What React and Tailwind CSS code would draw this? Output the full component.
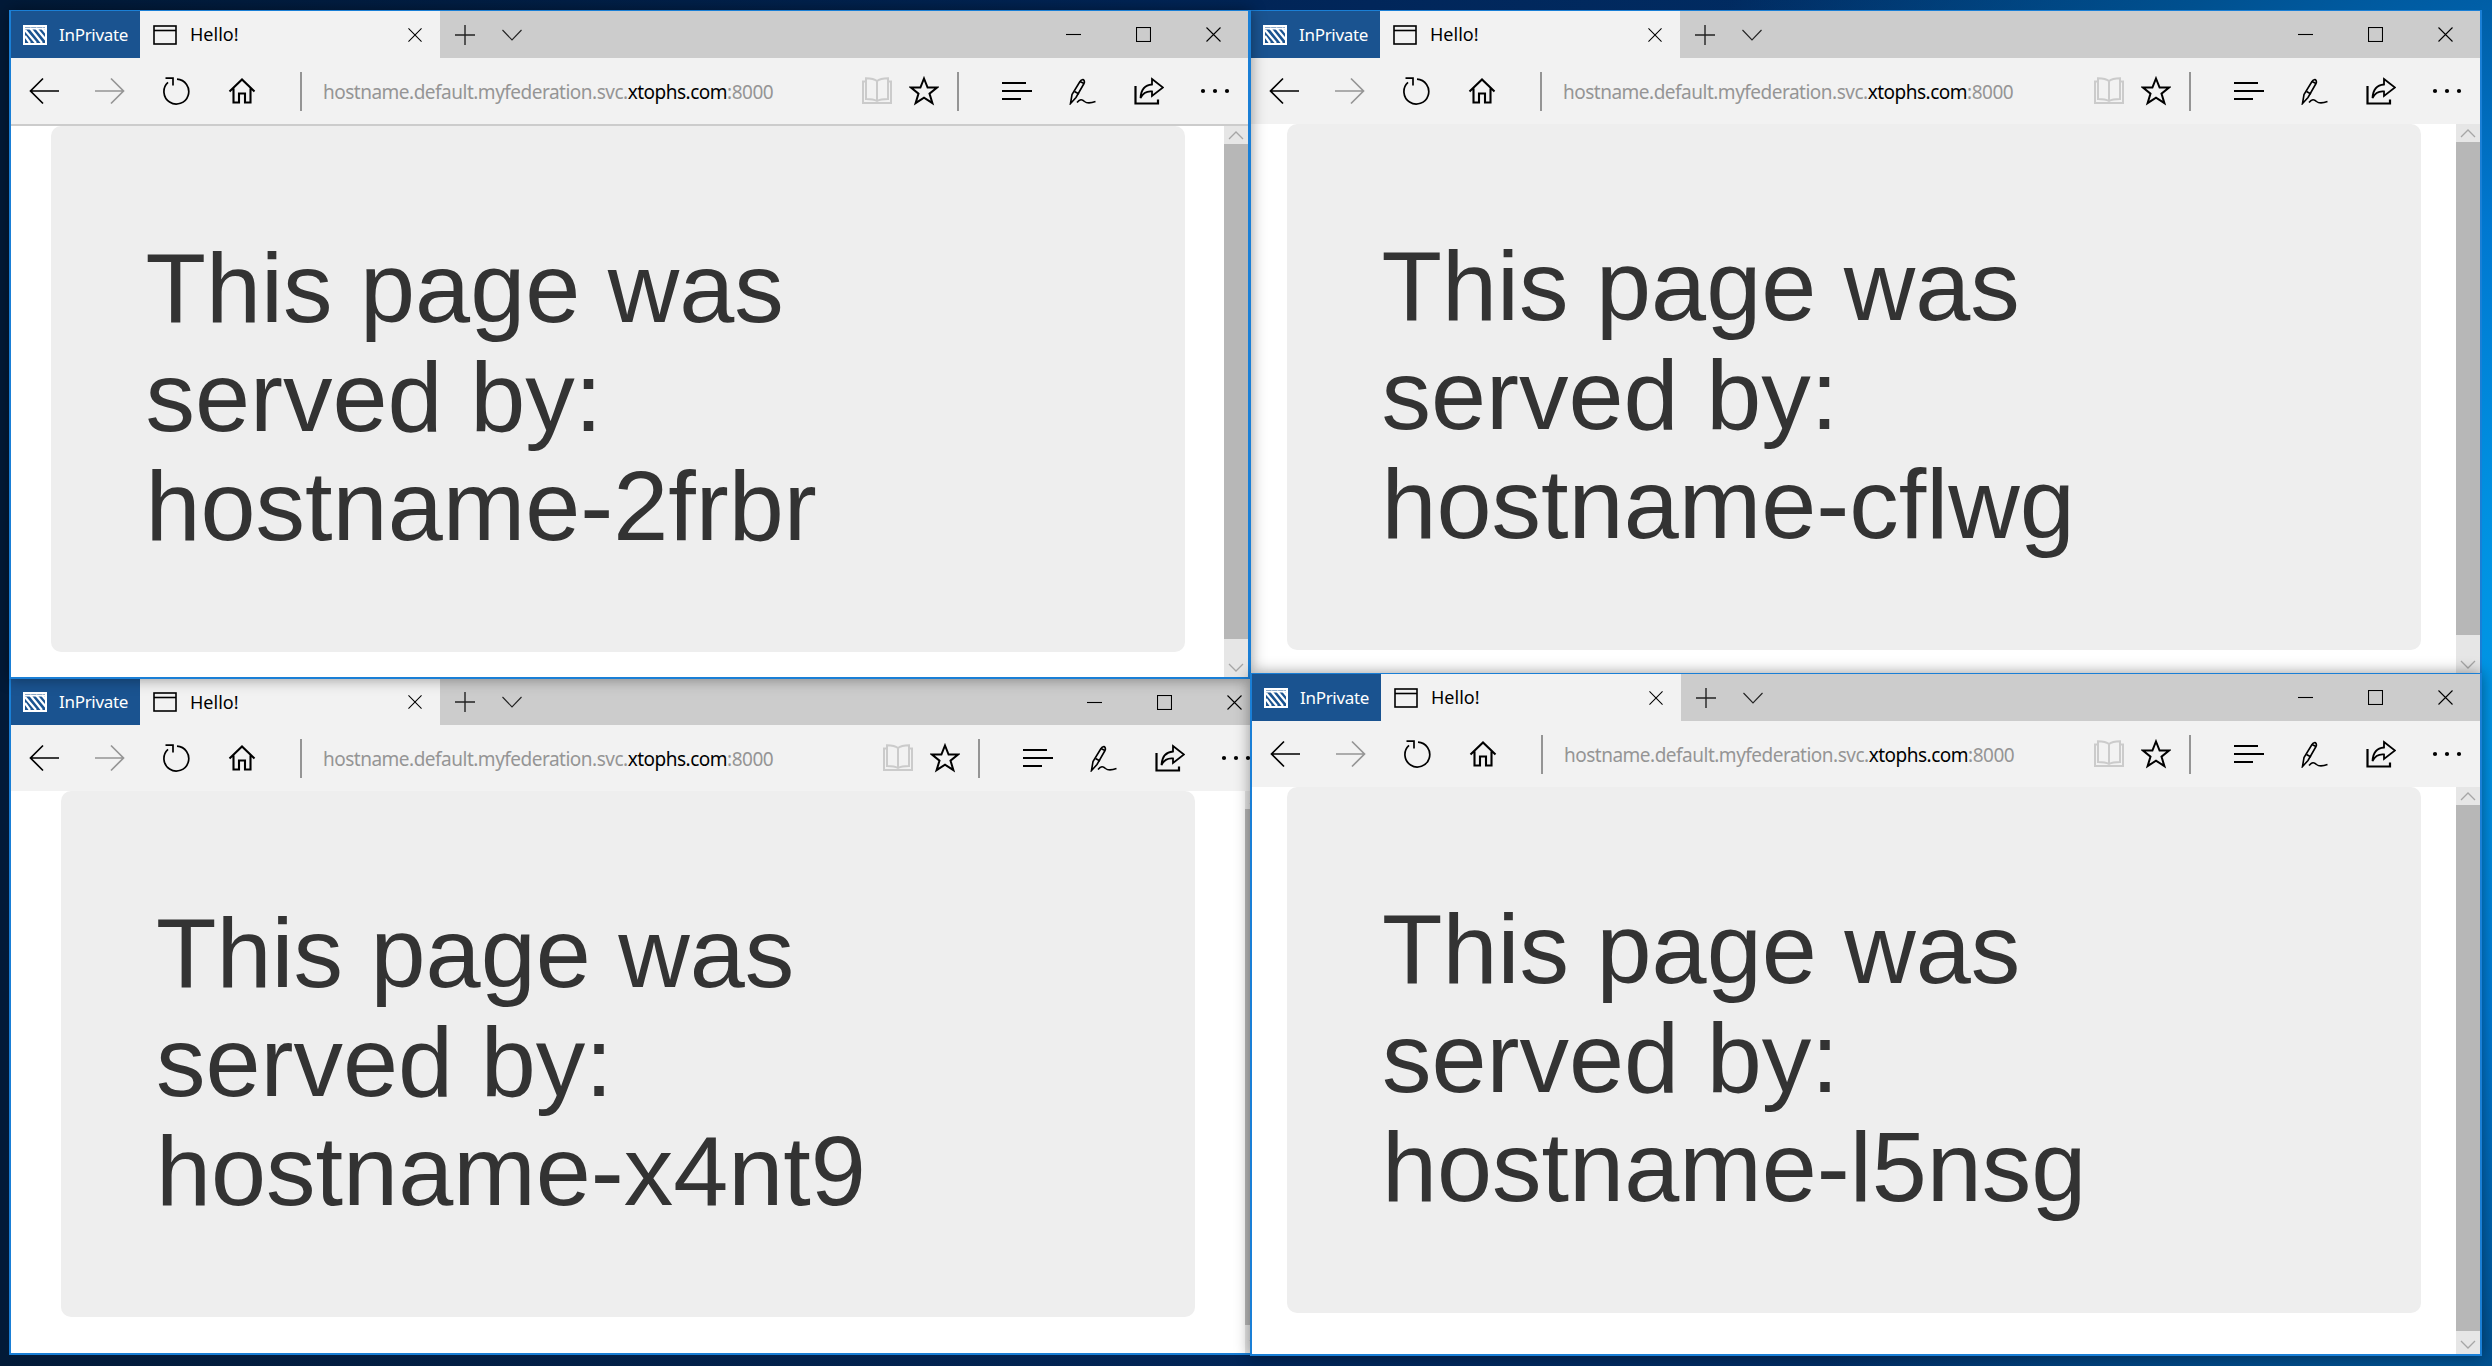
import React from 'react';

const uiFont = "font-['Noto_Sans','Open_Sans',sans-serif]";

// Edge toolbar glyphs, drawn by hand since the icon packs don't have the MDL2 shapes
const Back = ({ className = 'text-black' }) => (
  <svg width="30" height="28" viewBox="0 0 30 28" fill="none" stroke="currentColor" strokeWidth="1.7" className={className}>
    <path d="M1.5 14H30M14 1.5L1.5 14L14 26.5" />
  </svg>
);

const Forward = () => (
  <svg width="30" height="28" viewBox="0 0 30 28" fill="none" stroke="currentColor" strokeWidth="1.7" className="text-[#959595]">
    <path d="M0 14H28.5M16 1.5L28.5 14L16 26.5" />
  </svg>
);

const Refresh = () => (
  <svg width="28" height="28" viewBox="0 0 28 28" fill="none" stroke="currentColor" strokeWidth="1.7" className="text-black">
    <path d="M15 2.2A12.4 12.4 0 1 1 6 5.4" />
    <path d="M3.5 1.2H11V8.5" />
  </svg>
);

const Home = () => (
  <svg width="28" height="26" viewBox="0 0 28 26" fill="none" stroke="currentColor" strokeWidth="2.1" className="text-black">
    <path d="M1.5 13.5L14 1.5L26.5 13.5M5.5 10.5V24.5H11V15.5H17V24.5H22.5V10.5" />
  </svg>
);

const Book = () => (
  <svg width="30" height="28" viewBox="0 0 30 28" fill="none" stroke="currentColor" strokeWidth="2" className="text-[#cbcbcb]">
    <path d="M15 4C12 1.5 8 1.2 4 1.2V22C8 22 12 22.3 15 24C18 22.3 22 22 26 22V1.2C22 1.2 18 1.5 15 4V24" />
    <path d="M4 4.5H1V26H29V4.5H26" />
  </svg>
);

const Star = () => (
  <svg width="30" height="30" viewBox="0 0 30 30" fill="none" stroke="currentColor" strokeWidth="2" className="text-black">
    <path d="M15 2.5L18.6 11.6H28L20.5 17.6L23.4 27.2L15 21.6L6.6 27.2L9.5 17.6L2 11.6H11.4Z" />
  </svg>
);

const Hub = () => (
  <svg width="30" height="20" viewBox="0 0 30 20" fill="none" stroke="currentColor" className="text-black">
    <path d="M0 2H24" strokeWidth="2" />
    <path d="M0 10H30" strokeWidth="2" />
    <path d="M0 18H19" strokeWidth="2" />
  </svg>
);

const Pen = () => (
  <svg width="28" height="28" viewBox="0 0 28 28" fill="none" stroke="currentColor" strokeWidth="1.6" className="text-black">
    <path d="M1.5 26.5L3 17.5L11 4.5C12 2.5 14.5 2 15 3.5C15.6 4.5 15.5 5.5 15 6.5L7 20.5Z" />
    <path d="M5.5 14.5L10 17M11 4.5L15 6.5" />
    <path d="M8 25.5C11 22 13 22 15.5 24.5C18 26.5 21 26.5 26.5 24.5" />
  </svg>
);

const Share = () => (
  <svg width="30" height="28" viewBox="0 0 30 28" fill="none" stroke="currentColor" className="text-black">
    <path d="M1.5 9V26.5H24V22.5" strokeWidth="2.2" />
    <path d="M18 2L29 10.5L18 19V14.5C13 14 9 16 6.5 21C7 13 11 8 18 7.5Z" strokeWidth="1.8" />
  </svg>
);

const Dots = () => (
  <svg width="30" height="6" viewBox="0 0 30 6" fill="currentColor" className="text-black">
    <circle cx="3" cy="3" r="2.1" />
    <circle cx="15" cy="3" r="2.1" />
    <circle cx="27" cy="3" r="2.1" />
  </svg>
);

const PrivateIcon = () => (
  <svg width="24" height="20" viewBox="0 0 24 20" fill="none" stroke="currentColor" className="shrink-0 text-white">
    <rect x="1" y="1" width="22" height="18" strokeWidth="2" />
    <path d="M2 5L13 18M7 3L19 18M13 3L23 15M2 11L7 18M19 3L23 8" strokeWidth="2.2" />
    <path d="M1 3.5H23" strokeWidth="2" />
  </svg>
);

const TabIcon = () => (
  <svg width="24" height="20" viewBox="0 0 24 20" fill="none" stroke="currentColor" strokeWidth="1.6" className="shrink-0 text-black">
    <rect x="1" y="1" width="22" height="18" />
    <path d="M1 5.5H23" />
  </svg>
);

const CloseX = ({ size = 15 }) => (
  <svg width={size} height={size} viewBox="0 0 15 15" fill="none" stroke="currentColor" strokeWidth="1.1" className="text-black">
    <path d="M0.5 0.5L14.5 14.5M14.5 0.5L0.5 14.5" />
  </svg>
);

const Plus = () => (
  <svg width="20" height="20" viewBox="0 0 20 20" fill="none" stroke="currentColor" strokeWidth="1.4" className="text-[#222]">
    <path d="M10 0V20M0 10H20" />
  </svg>
);

const ChevronDown = () => (
  <svg width="20" height="12" viewBox="0 0 20 12" fill="none" stroke="currentColor" strokeWidth="1.1" className="text-[#222]">
    <path d="M0.5 1L10 11L19.5 1" />
  </svg>
);

const Minimize = () => (
  <svg width="15" height="15" viewBox="0 0 15 15" fill="none" stroke="currentColor" strokeWidth="1.1" className="text-black">
    <path d="M0 7.5H15" />
  </svg>
);

const Maximize = () => (
  <svg width="15" height="15" viewBox="0 0 15 15" fill="none" stroke="currentColor" strokeWidth="1.1" className="text-black">
    <rect x="0.5" y="0.5" width="14" height="14" />
  </svg>
);

const ScrollArrow = ({ up }) => (
  <svg width="16" height="9" viewBox="0 0 16 9" fill="none" stroke="currentColor" strokeWidth="1.3" className="text-[#a6a6a6]">
    <path d={up ? 'M1 8L8 1L15 8' : 'M1 1L8 8L15 1'} />
  </svg>
);

const Slot = ({ className = 'w-[66px]', children }) => (
  <div className={`flex h-full shrink-0 items-center justify-center ${className}`}>{children}</div>
);

const TabStrip = ({ tabClass }) => (
  <div className={`flex shrink-0 bg-[#cccccc] ${tabClass}`}>
    <div className="flex w-[129px] shrink-0 items-center gap-[12px] bg-[#1a5390] pl-[12px] text-[17px] tracking-[-0.3px] text-white">
      <PrivateIcon />
      <span>InPrivate</span>
    </div>
    <div className="flex w-[300px] shrink-0 items-center bg-[#f2f2f2] pl-[13px] text-[18px] text-black">
      <TabIcon />
      <span className="ml-[13px]">Hello!</span>
      <div className="ml-auto mr-[18px]"><CloseX size={14} /></div>
    </div>
    <Slot className="w-[50px]"><Plus /></Slot>
    <Slot className="w-[44px]"><ChevronDown /></Slot>
    <div className="ml-auto flex">
      <Slot className="w-[70px]"><Minimize /></Slot>
      <Slot className="w-[70px]"><Maximize /></Slot>
      <Slot className="w-[70px]"><CloseX /></Slot>
    </div>
  </div>
);

const Toolbar = ({ lineClass = '' }) => (
  <div className={`flex h-[66px] shrink-0 items-center bg-[#f2f2f2] ${lineClass}`}>
    <Slot><Back /></Slot>
    <Slot><Forward /></Slot>
    <Slot><Refresh /></Slot>
    <Slot><Home /></Slot>
    <div className="ml-[25px] h-[39px] w-[2px] shrink-0 bg-[#959595]" />
    <div className="ml-[21px] mt-[2px] whitespace-nowrap text-[19px] tracking-[-0.5px] text-[#959595]">
      hostname.default.myfederation.svc.<span className="text-black">xtophs.com</span>:8000
    </div>
    <div className="ml-auto flex h-full items-center">
      <Slot className="w-[47px]"><Book /></Slot>
      <Slot className="w-[48px]"><Star /></Slot>
      <div className="ml-[9px] mr-[25px] h-[39px] w-[2px] shrink-0 bg-[#959595]" />
      <Slot><Hub /></Slot>
      <Slot><Pen /></Slot>
      <Slot><Share /></Slot>
      <Slot><Dots /></Slot>
    </div>
  </div>
);

const Scrollbar = ({ thumbClass }) => (
  <div className="flex w-[24px] shrink-0 flex-col bg-[#e6e6e6]">
    <div className="flex h-[18px] shrink-0 items-center justify-center"><ScrollArrow up /></div>
    <div className={`shrink-0 bg-[#b7b7b7] ${thumbClass}`} />
    <div className="flex flex-1 flex-col items-center justify-end pb-[5px]"><ScrollArrow /></div>
  </div>
);

const BrowserWindow = ({ className, tabClass = 'h-[47px]', lineClass, thumbClass, host }) => (
  <div className={`absolute flex flex-col border-2 border-t border-[#1a7fd6] bg-white ${uiFont} ${className}`}>
    <TabStrip tabClass={tabClass} />
    <Toolbar lineClass={lineClass} />
    <div className="flex min-h-0 flex-1 overflow-hidden">
      <div className="min-w-0 flex-1 bg-white">
        <div className="mx-auto h-[526px] w-[1134px] rounded-[10px] bg-[#eeeeee] pl-[95px] pt-[107px] font-['Liberation_Sans',Arial,sans-serif] text-[99px] leading-[109px] text-[#333333]">
          <div>This page was</div>
          <div>served by:</div>
          <div>{host}</div>
        </div>
      </div>
      <Scrollbar thumbClass={thumbClass} />
    </div>
  </div>
);

export default function App() {
  return (
    <div className="relative h-[1366px] w-[2492px] overflow-hidden bg-[radial-gradient(circle_at_2640px_620px,#00a4ee_0,#0078d0_420px,#00508f_760px,rgba(0,40,90,0)_1100px),linear-gradient(to_right,#021a38,#01265a_55%,#00356f)]">
      <BrowserWindow
        className="left-[1249px] top-[10px] z-10 h-[666px] w-[1233px]"
        thumbClass="h-[493px]"
        host="hostname-cflwg"
      />
      <BrowserWindow
        className="left-[9px] top-[678px] z-10 h-[677px] w-[1262px]"
        tabClass="h-[46px]"
        thumbClass="h-[516px]"
        host="hostname-x4nt9"
      />
      <BrowserWindow
        className="left-[9px] top-[10px] z-20 h-[669px] w-[1242px] border-r-[3px] shadow-[0_0_14px_rgba(0,0,0,0.4)]"
        lineClass="box-content border-b-2 border-[#cccccc]"
        thumbClass="h-[495px]"
        host="hostname-2frbr"
      />
      <BrowserWindow
        className="left-[1250px] top-[673px] z-20 h-[683px] w-[1232px] shadow-[0_0_14px_rgba(0,0,0,0.4)]"
        thumbClass="h-[526px]"
        host="hostname-l5nsg"
      />
    </div>
  );
}
